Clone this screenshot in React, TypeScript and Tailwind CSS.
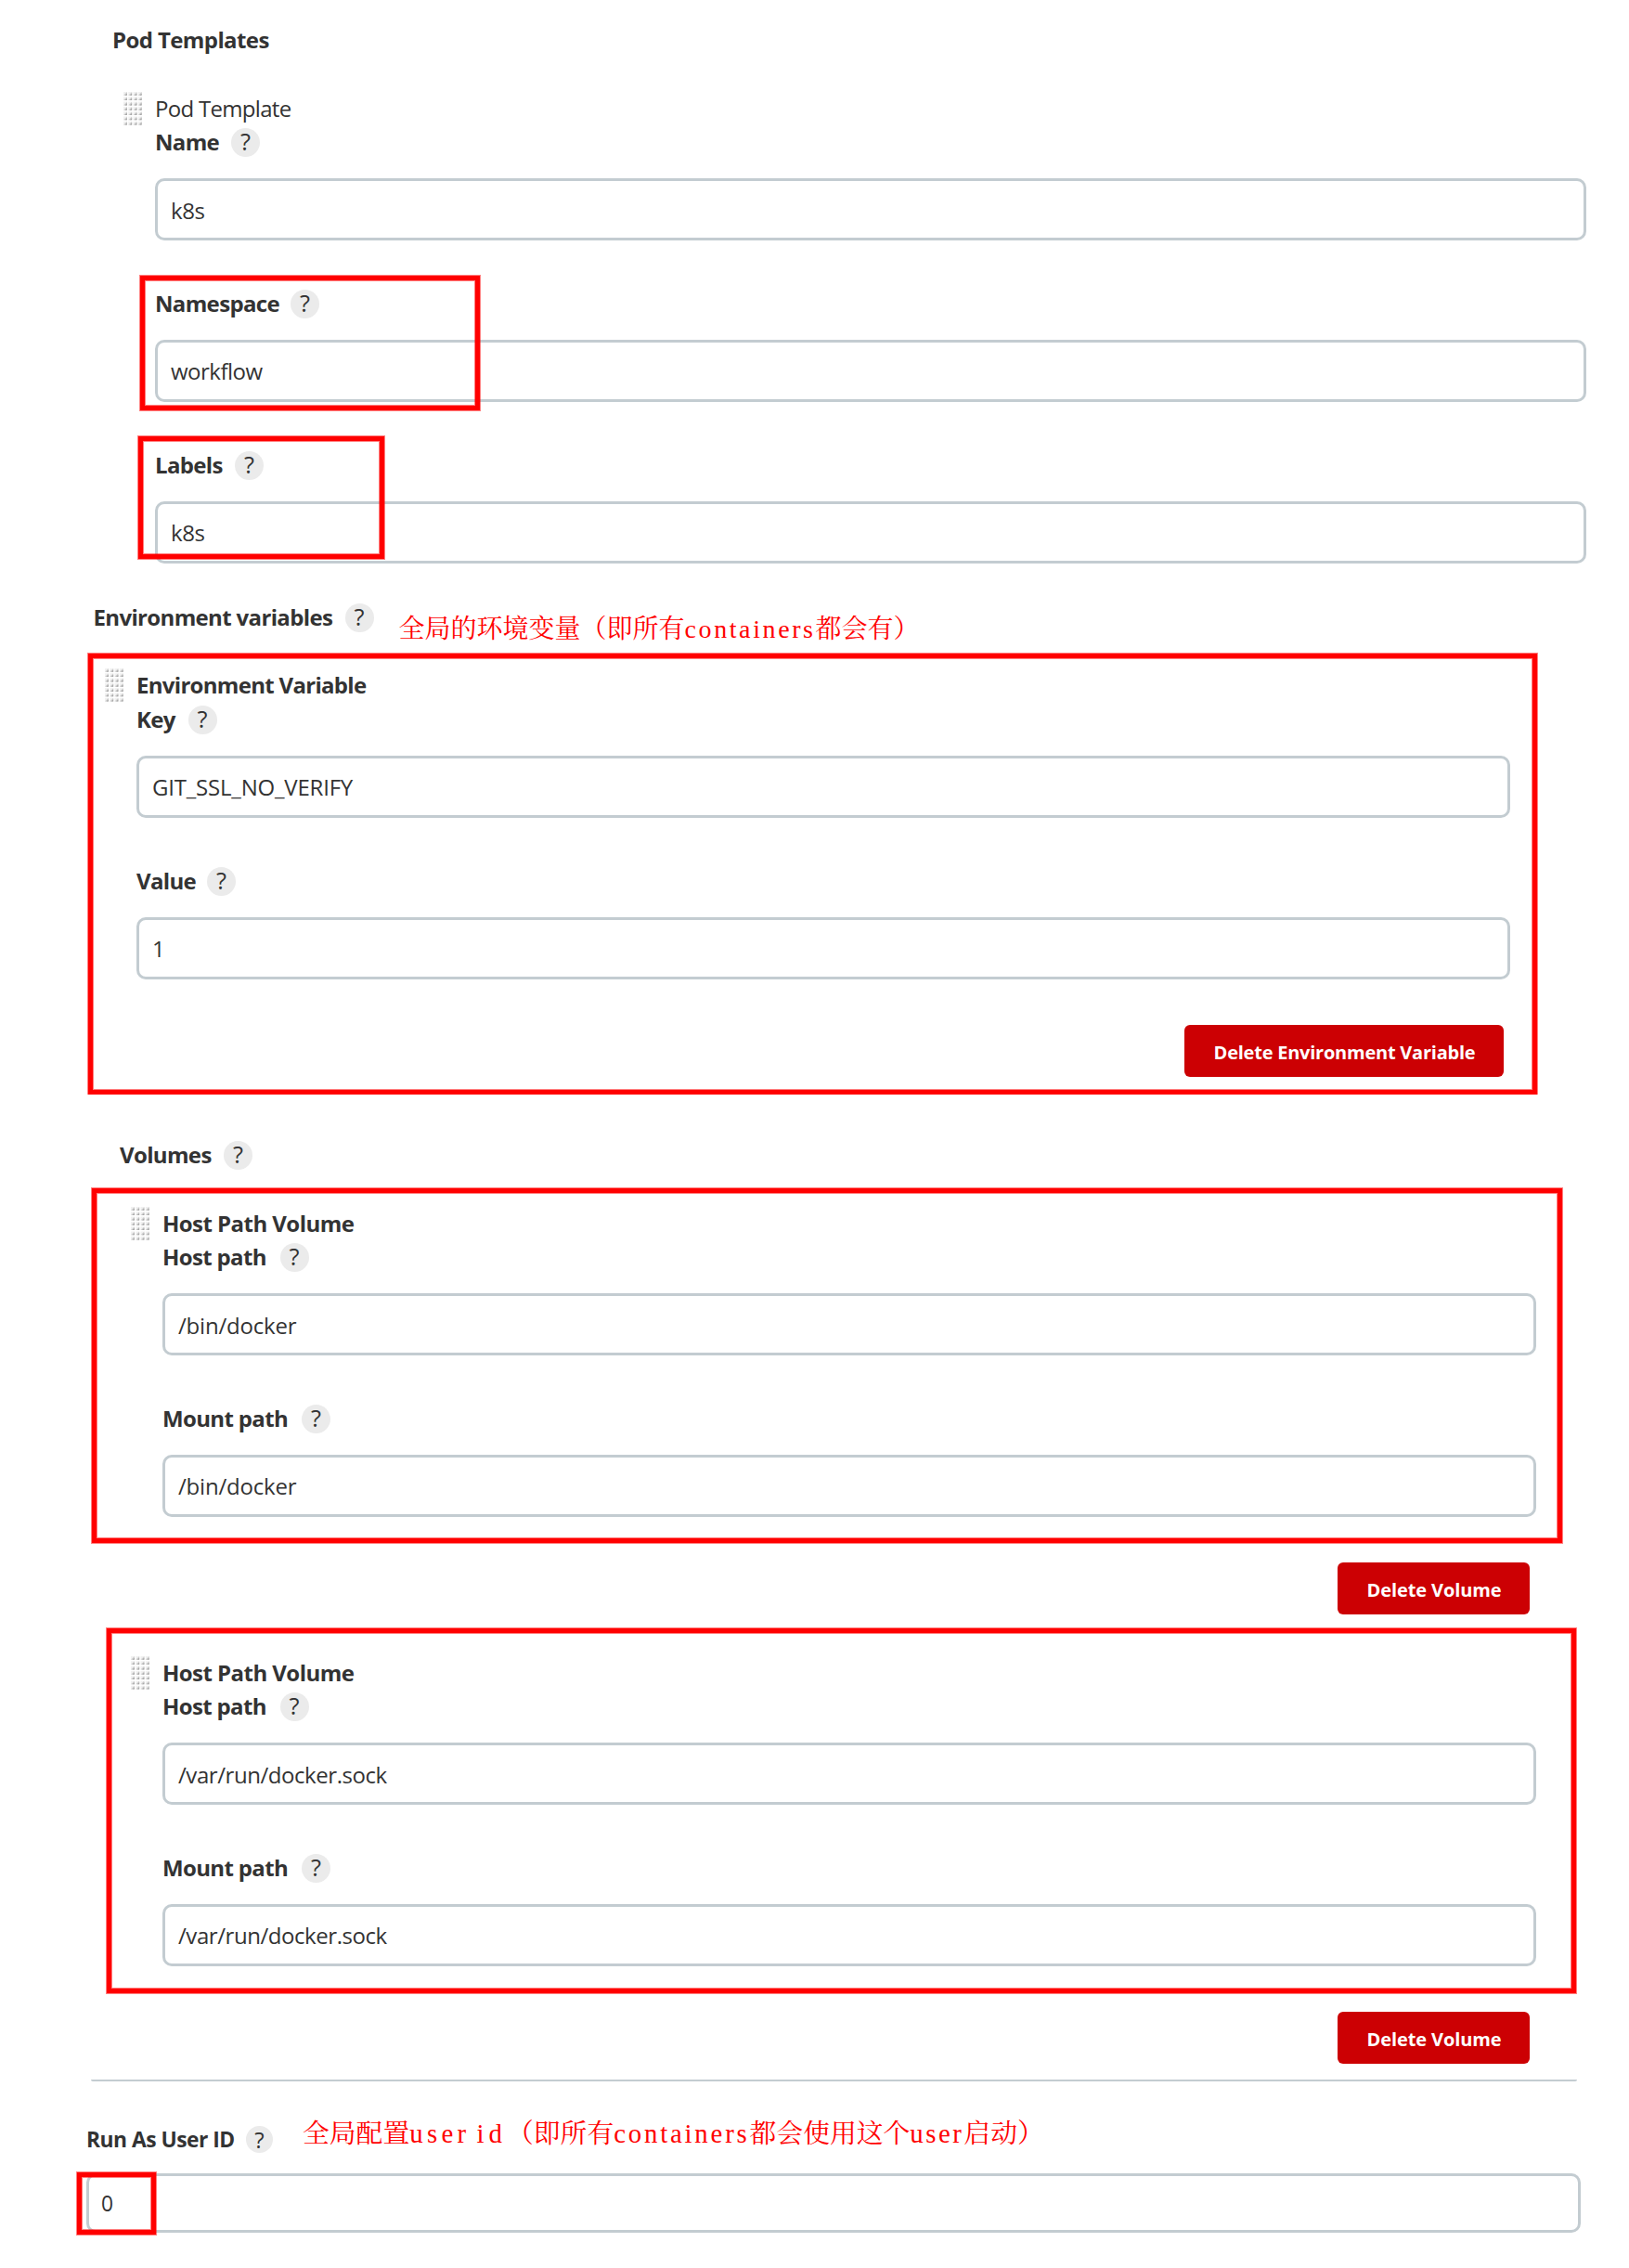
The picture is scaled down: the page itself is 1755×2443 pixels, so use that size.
import React from 'react';

const ROWS = [0, 1, 2, 3, 4, 5, 6];
const COLS = [0, 1, 2, 3];

function DragHandle() {
  return (
    <svg className="-mt-px -ml-px mr-3.5 h-[37px] w-5 shrink-0" viewBox="0 0 20 37">
      {ROWS.map((r) =>
        COLS.map((c) => (
          <g key={`${r}-${c}`} transform={`translate(${c * 5.25} ${r * 5.3})`}>
            <path d="M0 1h4v3.8H0z" fill="#f1f1f1" />
            <path d="M0 4.8 3.9 1v3.8z" fill="#cfcfcf" />
            <path d="M1.6 4.8 3.9 2.4v2.4z" fill="#a6a6a6" />
          </g>
        )),
      )}
    </svg>
  );
}

function Help({ small = false }: { small?: boolean }) {
  return (
    <span
      className={
        small
          ? 'flex size-[29px] shrink-0 items-center justify-center rounded-full bg-[#ebebeb] text-[24px] leading-none font-medium'
          : 'flex size-[31px] shrink-0 items-center justify-center rounded-full bg-[#ebebeb] text-[25.5px] leading-none font-medium'
      }
    >
      ?
    </span>
  );
}

function Label({ text, width }: { text: string; width: string }) {
  return (
    <div className="flex h-9 items-center">
      <span className={`${width} shrink-0 leading-9 font-bold tracking-[-0.65px] whitespace-nowrap`}>{text}</span>
      <Help />
    </div>
  );
}

function Input({ value, tracking = '', pad = 'pt-px' }: { value: string; tracking?: string; pad?: string }) {
  return (
    <div className={`${pad} mt-[21px] flex h-[67px] items-center rounded-[10px] border-[3px] border-[#c3ccd1] px-3.5`}>
      <span className={tracking}>{value}</span>
    </div>
  );
}

function Mark({ place }: { place: string }) {
  return (
    <div
      className={`${place} pointer-events-none absolute border-[5px] border-[#ff0000] shadow-[0_0_0_1px_rgba(255,0,0,0.5),inset_0_0_0_1px_rgba(255,0,0,0.5)]`}
    />
  );
}

function DeleteButton({ text, size }: { text: string; size: string }) {
  return (
    <button
      className={`${size} mt-[49px] mr-[7px] flex h-14 items-center justify-center self-end rounded-md bg-[#cc0003] pt-[3px] text-xl font-bold text-white`}
    >
      {text}
    </button>
  );
}

function HostPathVolume({ path, tracking, mark }: { path: string; tracking: string; mark: string }) {
  return (
    <div className="relative ml-[142px] flex w-[1513px]">
      <DragHandle />
      <div className="flex flex-1 flex-col">
        <h3 className="leading-9 font-bold tracking-[-0.55px]">Host Path Volume</h3>
        <Label text="Host path" width="w-[126.5px]" />
        <Input value={path} tracking={tracking} pad="pt-0.5" />
        <div className="h-[50px]" />
        <Label text="Mount path" width="w-[150px]" />
        <Input value={path} tracking={tracking} />
        <DeleteButton text="Delete Volume" size="w-[207px] pl-px tracking-[-0.1px]" />
      </div>
      <Mark place={mark} />
    </div>
  );
}

export default function App() {
  return (
    <main className="flex h-[2443px] w-[1755px] flex-col overflow-hidden bg-white pt-[25px] font-['Open_Sans','Noto_Sans',sans-serif] text-2xl text-[#333333]">
      <h2 className="ml-[121px] leading-9 font-bold tracking-[-0.6px]">Pod Templates</h2>

      <section className="mt-[38px] ml-[134px] flex w-[1575px]">
        <DragHandle />
        <div className="flex flex-1 flex-col">
          <h3 className="leading-9 tracking-[-0.7px]">Pod Template</h3>
          <Label text="Name" width="w-[82px]" />
          <Input value="k8s" tracking="tracking-[-0.4px]" pad="pt-0.5" />
          <div className="relative mt-[50px]">
            <Label text="Namespace" width="w-[146px]" />
            <Input value="workflow" tracking="tracking-[-0.5px]" />
            <Mark place="-left-4 -top-3 h-[145px] w-[366px]" />
          </div>
          <div className="relative mt-[50px]">
            <Label text="Labels" width="w-[86px]" />
            <Input value="k8s" tracking="tracking-[-0.4px]" />
            <Mark place="-left-[18px] -top-[13px] h-[132px] w-[265px]" />
          </div>
        </div>
      </section>

      <div className="relative mt-10 ml-[100.5px]">
        <Label text="Environment variables" width="w-[271px]" />
        <p className="absolute top-[17px] left-[329px] font-['Liberation_Serif','Noto_Serif_CJK_SC','Noto_Sans_CJK_SC',serif] text-[28px] leading-7 whitespace-nowrap text-[#ff0000]">
          全局的环境变量（即所有<span className="tracking-[2.6px]">containers</span>都会有）
        </p>
      </div>

      <section className="relative mt-[37px] ml-[114px] flex w-[1513px]">
        <DragHandle />
        <div className="flex flex-1 flex-col">
          <h3 className="leading-9 font-bold tracking-[-0.7px]">Environment Variable</h3>
          <div className="h-px" />
          <Label text="Key" width="w-[55.5px]" />
          <Input value="GIT_SSL_NO_VERIFY" tracking="tracking-[-0.2px]" />
          <div className="h-[50px]" />
          <Label text="Value" width="w-[76px]" />
          <Input value="1" />
          <DeleteButton text="Delete Environment Variable" size="w-[344px] pl-px tracking-[-0.23px]" />
        </div>
        <Mark place="-left-[19px] -top-4 h-[475px] w-[1561px]" />
        <div className="absolute -bottom-5 -left-5 h-px w-[1563px] bg-white" />
      </section>

      <div className="mt-[66px] ml-[129px]">
        <Label text="Volumes" width="w-[112px]" />
      </div>

      <div className="mt-[38px] flex flex-col gap-[45px]">
        <HostPathVolume path="/bin/docker" tracking="tracking-[-0.2px]" mark="-left-[43px] -top-5 h-[382px] w-[1584px]" />
        <HostPathVolume path="/var/run/docker.sock" tracking="tracking-[-0.44px]" mark="-left-[27px] -top-[30px] h-[393px] w-[1583px]" />
      </div>

      <div className="mt-[17px] ml-[98px] h-0.5 w-[1601px] shrink-0 rounded-b-sm bg-[#c3ccd1]" />

      <section className="relative mt-[45px] ml-[93px] w-[1610px]">
        <div className="flex h-[34px] items-center pt-px">
          <span className="w-[172px] shrink-0 text-[22.8px] leading-[34px] font-bold tracking-[-0.5px] whitespace-nowrap">Run As User ID</span>
          <Help small />
        </div>
        <p className="absolute -top-[3px] left-[233px] font-['Liberation_Serif','Noto_Serif_CJK_SC','Noto_Sans_CJK_SC',serif] text-[28.8px] leading-7 whitespace-nowrap text-[#ff0000]">
          全局配置<span className="tracking-[4.3px]">user</span> <span className="tracking-[5px]">id</span>（即所有
          <span className="tracking-[2.8px]">containers</span>都会使用这个<span className="tracking-[2.5px]">user</span>启动）
        </p>
        <div className="mt-5 flex h-16 items-center rounded-[10px] border-[3px] border-[#c3ccd1] px-[13px] pt-0.5 text-[22.8px]">0</div>
        <Mark place="-left-[10px] top-[53px] h-[67px] w-[85px]" />
      </section>
    </main>
  );
}
